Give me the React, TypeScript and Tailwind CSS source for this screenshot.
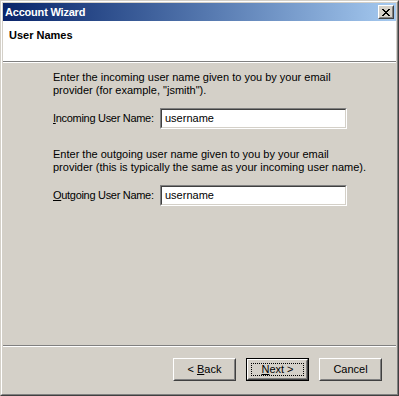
const font = { fontFamily: '"Liberation Sans", Arial, sans-serif' };

function SunkenInput({ value }: { value: string }) {
    return (
        <div className="w-[187px] h-[21px] shrink-0 border border-t-[#808080] border-l-[#808080] border-r-white border-b-white">
            <div className="w-full h-full border border-t-[#404040] border-l-[#404040] border-r-[#d4d0c8] border-b-[#d4d0c8] bg-white flex items-center pl-[3px]">
                <span className="text-[11px] text-black leading-none">{value}</span>
            </div>
        </div>
    );
}

function Button({ children, isDefault }: { children: React.ReactNode; isDefault?: boolean }) {
    const face = (
        <div className="w-full h-full border border-t-white border-l-white border-r-[#404040] border-b-[#404040]">
            <div className="w-full h-full border border-t-[#d4d0c8] border-l-[#d4d0c8] border-r-[#808080] border-b-[#808080] bg-[#d4d0c8] flex items-center justify-center p-[2px]">
                <div
                    className={
                        "w-full h-full flex items-center justify-center text-[11px] text-black " +
                        (isDefault ? "border border-dotted border-black" : "")
                    }
                >
                    {children}
                </div>
            </div>
        </div>
    );
    return (
        <div className={"w-[63px] h-[23px] " + (isDefault ? "border border-black" : "")}>{face}</div>
    );
}

export default function App() {
    return (
        <div style={font} className="w-[399px] h-[396px] select-none">
            <div className="w-full h-full border border-t-[#d4d0c8] border-l-[#d4d0c8] border-r-[#404040] border-b-[#404040]">
                <div className="w-full h-full border border-t-white border-l-white border-r-[#808080] border-b-[#808080] bg-[#d4d0c8] p-[1px]">
                    <div className="w-full h-full flex flex-col">
                        {/* title bar */}
                        <div className="h-[18px] shrink-0 bg-linear-to-r from-[#0a246a] to-[#a6caf0] flex items-center justify-between pl-[2px] pr-[2px]">
                            <span className="text-white font-bold text-[11px] leading-none tracking-[-0.2px]">Account Wizard</span>
                            <div className="w-[16px] h-[14px] border border-t-white border-l-white border-r-[#404040] border-b-[#404040]">
                                <div className="w-full h-full border border-t-[#d4d0c8] border-l-[#d4d0c8] border-r-[#808080] border-b-[#808080] bg-[#d4d0c8] flex items-center justify-center">
                                    <svg width="8" height="7" viewBox="0 0 8 7" shapeRendering="crispEdges">
                                        <path
                                            d="M0 0h2v1h-2zM6 0h2v1h-2zM1 1h2v1h-2zM5 1h2v1h-2zM2 2h4v1h-4zM3 3h2v1h-2zM2 4h4v1h-4zM1 5h2v1h-2zM5 5h2v1h-2zM0 6h2v1h-2zM6 6h2v1h-2z"
                                            fill="#000"
                                        />
                                    </svg>
                                </div>
                            </div>
                        </div>

                        {/* header */}
                        <div className="h-[41px] shrink-0 bg-white border-b border-b-[#808080] pl-[6px] pt-[8px]">
                            <p className="text-[11px] font-bold text-black leading-[13px]">User Names</p>
                        </div>
                        <div className="h-px bg-white shrink-0" />

                        {/* body */}
                        <div className="flex-1 pl-[50px] pt-[8px] text-[11px] text-black">
                            <p className="leading-[13px] whitespace-nowrap">
                                Enter the incoming user name given to you by your email
                                <br />
                                provider (for example, "jsmith").
                            </p>
                            <div className="flex items-center mt-[11px]">
                                <span className="w-[107px] shrink-0 leading-none tracking-[-0.3px]">
                                    <span className="underline">I</span>ncoming User Name:
                                </span>
                                <SunkenInput value="username" />
                            </div>
                            <p className="leading-[13px] whitespace-nowrap mt-[19px]">
                                Enter the outgoing user name given to you by your email
                                <br />
                                provider (this is typically the same as your incoming user name).
                            </p>
                            <div className="flex items-center mt-[11px]">
                                <span className="w-[107px] shrink-0 leading-none tracking-[-0.3px]">
                                    <span className="underline">O</span>utgoing User Name:
                                </span>
                                <SunkenInput value="username" />
                            </div>
                        </div>

                        {/* footer */}
                        <div className="h-[48px] shrink-0 border-t border-t-[#808080]">
                            <div className="border-t border-t-white h-full flex justify-end items-start gap-[10px] pt-[11px] pr-[14px]">
                                <Button>
                                    &lt; <span className="underline ml-[3px]">B</span>ack
                                </Button>
                                <Button isDefault>
                                    <span className="underline">N</span>ext &gt;
                                </Button>
                                <Button>Cancel</Button>
                            </div>
                        </div>
                    </div>
                </div>
            </div>
        </div>
    );
}
